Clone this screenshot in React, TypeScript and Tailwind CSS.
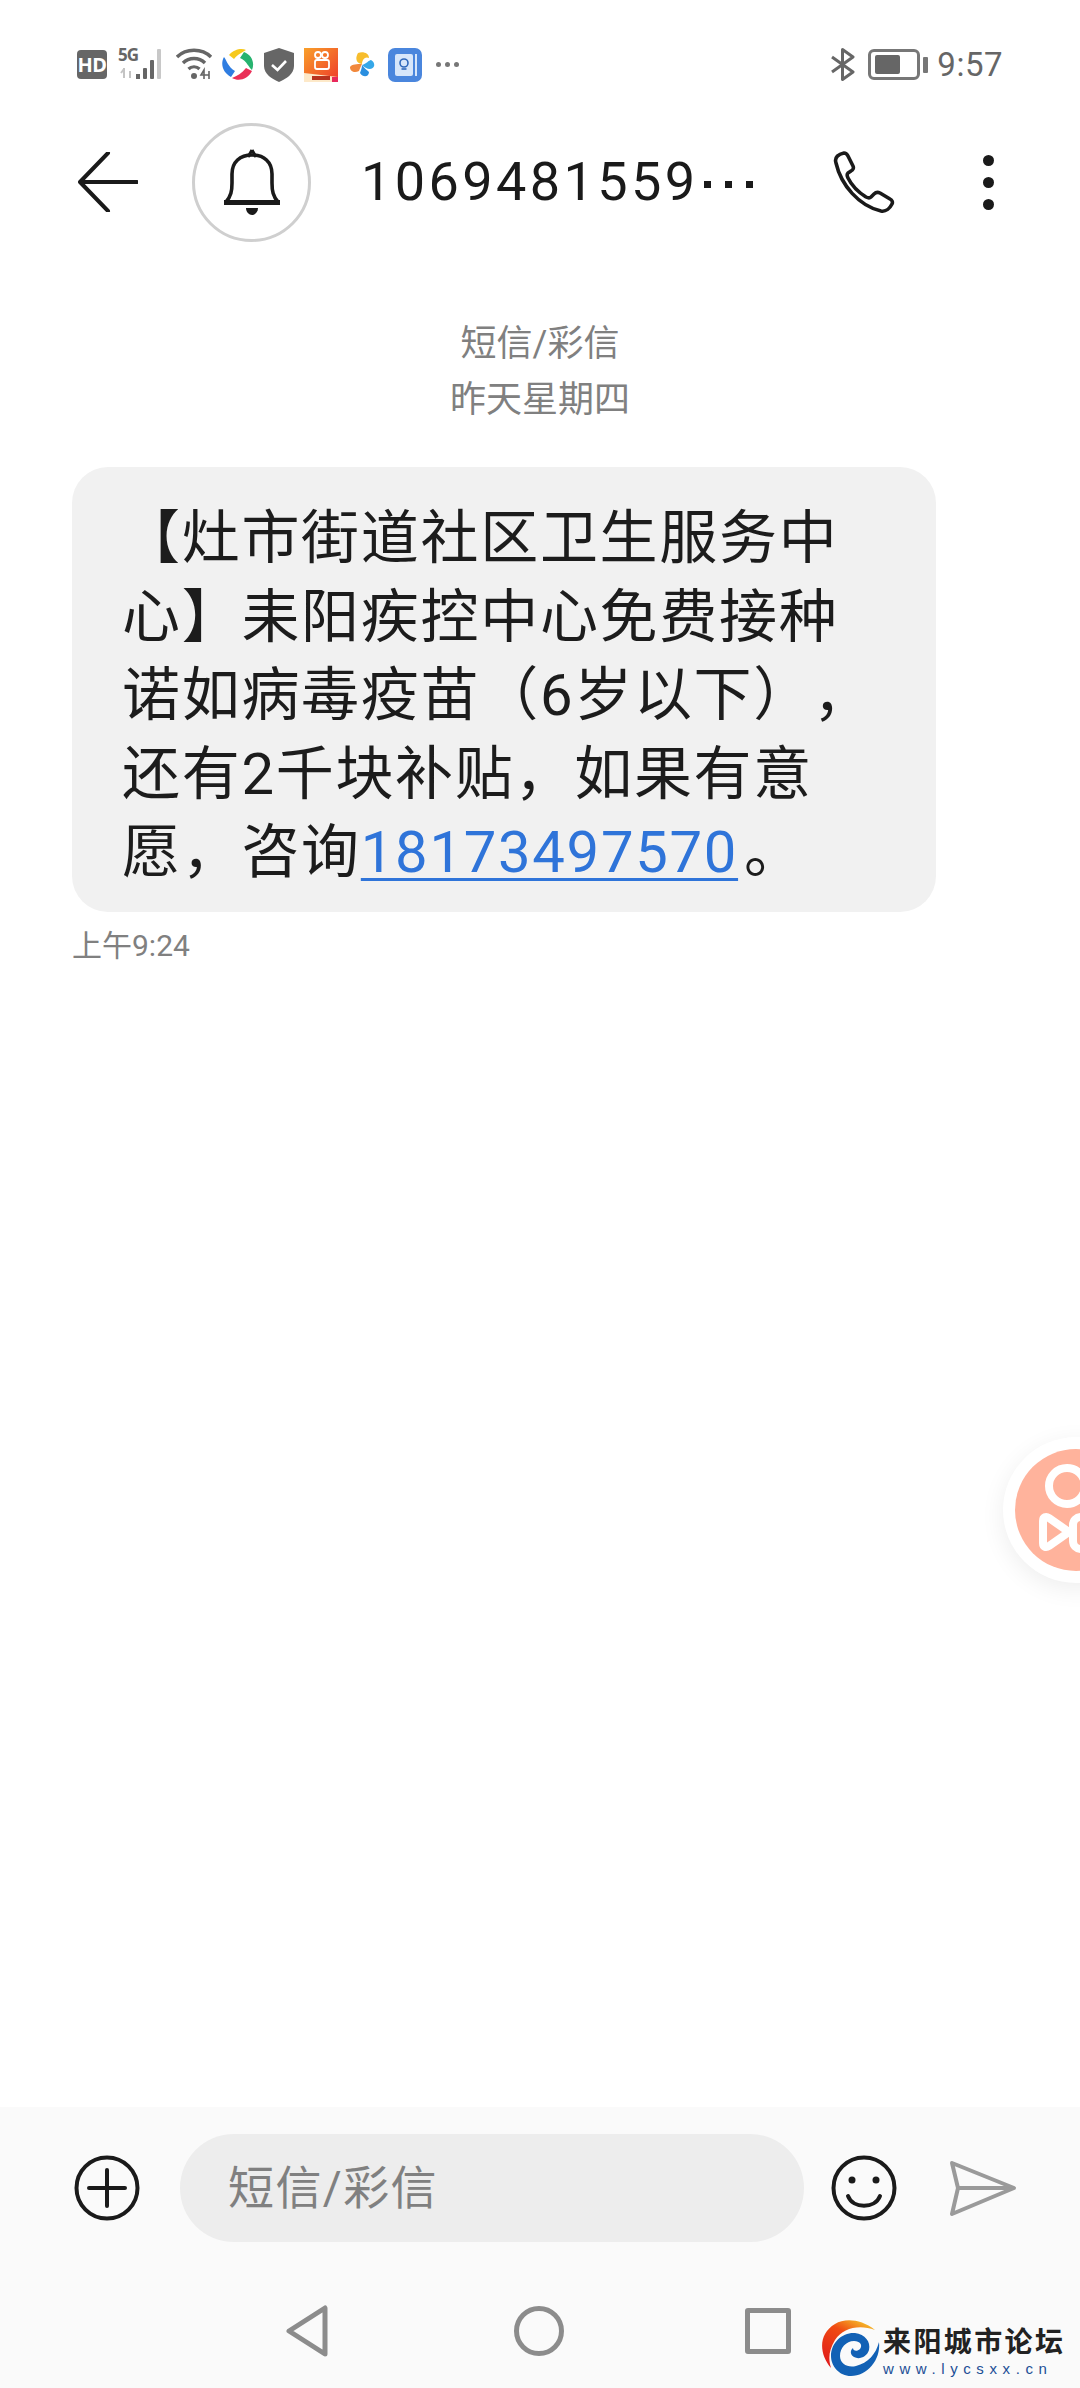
import React from 'react';

const cjk = "font-['Roboto','Noto_Sans_CJK_SC',sans-serif]";

function StatusBar() {
  return (
    <div className="flex h-[122px] items-start pl-[77px] pr-[77px] pt-[48px]">
      <div className="mt-[2px] flex h-[29px] w-[30px] items-center justify-center rounded-[4px] bg-[#666666] text-[20px] font-bold leading-none tracking-[-0.5px] text-white">
        HD
      </div>
      {/* 5G + signal */}
      <div className="relative ml-[11px] h-[32px] w-[49px]">
        <span className="absolute left-0 top-[-2px] text-[17px] font-bold leading-[18px] tracking-[-1px] text-[#666666]">5G</span>
        <svg className="absolute inset-0" width="49" height="32" viewBox="0 0 49 32">
          <path d="M6 20v10M3 25l3-4M12 23v7" stroke="#c4c4c4" strokeWidth="2" fill="none" />
          <rect x="18" y="26" width="4" height="5" fill="#666" />
          <rect x="25" y="20" width="4" height="11" rx="1" fill="#666" />
          <rect x="32" y="12" width="4" height="19" rx="1" fill="#666" />
          <rect x="39" y="1" width="4" height="30" rx="1" fill="#c8c8c8" />
        </svg>
      </div>
      {/* wifi */}
      <svg className="ml-[9px]" width="38" height="32" viewBox="0 0 38 32" fill="none">
        <path d="M1 9C10 0 26 0 35 9" stroke="#666" strokeWidth="3.4" />
        <path d="M7 15C13 9 23 9 29 15" stroke="#666" strokeWidth="3.4" />
        <path d="M12.5 21C15.5 18 20.5 18 23.5 21" stroke="#666" strokeWidth="3.2" />
        <circle cx="18" cy="28" r="3" fill="#666" />
        <path d="M28 31v-9l-3 5h8M33 23v8" stroke="#666" strokeWidth="1.6" />
      </svg>
      {/* ring logo */}
      <svg className="ml-[7px]" width="33" height="33" viewBox="0 0 33 33" fill="none">
        <path d="M8 7C13 1 21 0 25 2C22 4 17 6 13 11Z" fill="#f6c91d" />
        <path d="M23 4C31 7 34 15 31 22C28 20 26 13 19 10Z" fill="#27b36f" />
        <path d="M31 23C27 31 18 34 11 30C16 28 21 25 25 20Z" fill="#ea2f57" />
        <path d="M10 29C2 25 -1 16 3 9C6 13 7 19 14 23Z" fill="#2f7de1" />
      </svg>
      {/* shield */}
      <svg className="ml-[10px]" width="30" height="34" viewBox="0 0 30 34">
        <path d="M15 0L30 5V18C30 26 22 31 15 34C8 31 0 26 0 18V5Z" fill="#666" />
        <path d="M8 17L13.5 22L22 13" stroke="#fff" strokeWidth="2.6" fill="none" />
      </svg>
      {/* kuaishou */}
      <svg className="ml-[10px]" width="34" height="34" viewBox="0 0 34 34">
        <defs>
          <linearGradient id="ks" x1="0" y1="0" x2="1" y2="1">
            <stop offset="0" stopColor="#f9a02a" />
            <stop offset="1" stopColor="#ee3a2a" />
          </linearGradient>
        </defs>
        <rect width="34" height="34" fill="url(#ks)" />
        <circle cx="14" cy="7" r="3" fill="none" stroke="#fff" strokeWidth="1.8" />
        <circle cx="21" cy="7" r="3" fill="none" stroke="#fff" strokeWidth="1.8" />
        <rect x="11" y="12" width="14" height="9" rx="2" fill="none" stroke="#fff" strokeWidth="1.8" />
        <path d="M0 25L34 29V34H0Z" fill="#fde9c9" />
        <rect x="8" y="28" width="18" height="4" fill="#b8341f" />
        <rect x="28" y="29" width="6" height="5" fill="#e8285c" />
      </svg>
      {/* pinwheel */}
      <svg className="ml-[12px] mt-[4px]" width="25" height="26" viewBox="0 0 25 26">
        <path d="M8 1C13 -1 19 1 19 6C15 4 12 8 12 12C8 12 4 8 8 1Z" fill="#f7bd2d" />
        <path d="M12 12C7 12 2 12 0 15C0 20 5 21 9 19C10 16 11 14 12 12Z" fill="#f1883c" />
        <path d="M12 13C16 12 19 8 21 8C25 10 26 16 20 17C17 17 14 15 12 13Z" fill="#35a7e8" />
        <path d="M12 13C12 17 10 20 10 21C13 26 19 25 19 20C17 18 14 16 12 13Z" fill="#2a8fe0" />
      </svg>
      {/* note book */}
      <svg className="ml-[13px]" width="34" height="34" viewBox="0 0 34 34">
        <rect width="34" height="34" rx="7" fill="#4a86dd" />
        <rect x="7" y="6" width="18" height="22" rx="2" fill="#d7e6fa" />
        <rect x="27" y="6" width="2" height="22" fill="#d7e6fa" />
        <circle cx="16" cy="15" r="4" fill="none" stroke="#2f68bb" strokeWidth="1.6" />
        <path d="M13.5 21h5" stroke="#2f68bb" strokeWidth="1.6" />
      </svg>
      <div className="ml-[14px] mt-[14px] flex gap-[4px]">
        <span className="h-[5px] w-[5px] rounded-full bg-[#777777]" />
        <span className="h-[5px] w-[5px] rounded-full bg-[#777777]" />
        <span className="h-[5px] w-[5px] rounded-full bg-[#777777]" />
      </div>

      <div className="ml-auto flex items-start">
        <svg width="26" height="33" viewBox="0 0 26 33" fill="none">
          <path d="M2 9L23 24L12.5 31.5V1.5L23 9L2 24" stroke="#666" strokeWidth="3" strokeLinejoin="round" />
        </svg>
        <div className="ml-[12px] mt-[1px] flex h-[31px] w-[52px] items-center rounded-[6px] border-[3px] border-[#777777] pl-[4px]">
          <div className="h-[19px] w-[25px] rounded-[2px] bg-[#666666]" />
        </div>
        <div className="ml-[3px] mt-[9px] h-[16px] w-[5px] rounded-[1px] bg-[#777777]" />
        <span className={`ml-[9px] mt-[-1px] text-[33px] leading-[36px] tracking-[0.5px] text-[#666666] ${cjk}`}>9:57</span>
      </div>
    </div>
  );
}

function Header() {
  return (
    <div className="flex h-[120px] items-center pl-[78px]">
      <svg width="60" height="60" viewBox="0 0 60 60" fill="none">
        <path d="M59 30H3M30 1L2 30L30 59" stroke="#1a1a1a" strokeWidth="4" strokeLinecap="round" strokeLinejoin="round" />
      </svg>
      <div className="ml-[54px] flex h-[119px] w-[119px] items-center justify-center rounded-full border-[3px] border-[#cfcfcf]">
        <svg width="58" height="66" viewBox="0 0 58 66" fill="none">
          <path d="M29 1L33 8" stroke="#1a1a1a" strokeWidth="3" />
          <path d="M29 1L25 8" stroke="#1a1a1a" strokeWidth="3" />
          <path d="M3 53C8 47 9 42 9 34V25C9 13 17 6 29 6C41 6 49 13 49 25V34C49 42 50 47 55 53Z" stroke="#1a1a1a" strokeWidth="3.6" strokeLinejoin="round" />
          <rect x="1" y="51" width="56" height="5" fill="#1a1a1a" />
          <path d="M23 59H35C35 63 32 66 29 66C26 66 23 63 23 59Z" fill="#1a1a1a" />
        </svg>
      </div>
      <div className={`ml-[50px] flex w-[400px] items-center text-[54px] leading-[60px] tracking-[3.4px] text-[#1a1a1a] ${cjk}`}>
        1069481559
        <div className="ml-[5px] mt-[4px] flex gap-[14px]">
          <span className="h-[7px] w-[7px] bg-[#1a1a1a]" />
          <span className="h-[7px] w-[7px] bg-[#1a1a1a]" />
          <span className="h-[7px] w-[7px] bg-[#1a1a1a]" />
        </div>
      </div>
      <svg className="ml-[72px]" width="62" height="62" viewBox="0 0 62 62" fill="none">
        <path d="M3 12C1 6 6 3 11 2C13 2 14 3 15 5L20 15C21 17 20 19 18 20L15 22C14 23 14 25 15 27C19 35 25 41 33 46C35 47 37 47 38 46L41 43C43 41 45 41 47 42L57 48C59 49 60 51 59 53C57 57 53 61 48 60C26 55 8 34 3 12Z" stroke="#1a1a1a" strokeWidth="3.6" strokeLinejoin="round" />
      </svg>
      <div className="ml-[88px] flex flex-col gap-[11px]">
        <span className="h-[11px] w-[11px] rounded-full bg-[#1a1a1a]" />
        <span className="h-[11px] w-[11px] rounded-full bg-[#1a1a1a]" />
        <span className="h-[11px] w-[11px] rounded-full bg-[#1a1a1a]" />
      </div>
    </div>
  );
}

function Message() {
  return (
    <div className="flex-1 px-[72px] pt-[74px]">
      <div className={`text-center text-[36px] leading-[56px] text-[#808080] ${cjk}`}>
        <div>短信/彩信</div>
        <div>昨天星期四</div>
      </div>
      <div className={`mt-[39px] h-[445px] w-[864px] rounded-[36px] bg-[#f1f1f1] pl-[50px] pt-[32px] text-[58px] leading-[78.5px] tracking-[1.7px] text-[#1c1c1c] [text-spacing-trim:space-all] ${cjk}`}>
        <div className="whitespace-nowrap">【灶市街道社区卫生服务中</div>
        <div className="whitespace-nowrap">心】耒阳疾控中心免费接种</div>
        <div className="whitespace-nowrap">诺如病毒疫苗（6岁以下），</div>
        <div className="whitespace-nowrap">还有2千块补贴，如果有意</div>
        <div className="whitespace-nowrap">
          愿，咨询<span className="text-[#2f74d9] underline decoration-[3px] underline-offset-[6px]">18173497570</span><span className="ml-[6px]">。</span>
        </div>
      </div>
      <div className={`mt-[14px] text-[30px] leading-[40px] text-[#808080] ${cjk}`}>上午9:24</div>
    </div>
  );
}

function Composer() {
  return (
    <div className="h-[281px] bg-[#fafafa]">
      <div className="flex items-center pl-[74px] pt-[27px]">
        <svg width="66" height="66" viewBox="0 0 66 66" fill="none">
          <circle cx="33" cy="33" r="30.5" stroke="#1a1a1a" strokeWidth="4" />
          <path d="M33 15V51M15 33H51" stroke="#1a1a1a" strokeWidth="4" strokeLinecap="round" />
        </svg>
        <div className={`ml-[40px] flex h-[108px] w-[624px] items-center rounded-full bg-[#ededed] pl-[48px] text-[46px] tracking-[1.4px] text-[#808080] ${cjk}`}>
          短信/彩信
        </div>
        <svg className="ml-[27px]" width="66" height="66" viewBox="0 0 66 66" fill="none">
          <circle cx="33" cy="33" r="30.5" stroke="#1a1a1a" strokeWidth="4" />
          <circle cx="21" cy="25" r="3.5" fill="#1a1a1a" />
          <circle cx="45" cy="25" r="3.5" fill="#1a1a1a" />
          <path d="M17 41C22 54 44 54 49 41" stroke="#1a1a1a" strokeWidth="4" strokeLinecap="round" />
        </svg>
        <svg className="ml-[52px]" width="68" height="57" viewBox="0 0 68 57" fill="none">
          <path d="M3 3L65 28L3 54L9 28ZM9 28H65" stroke="#9a9a9a" strokeWidth="4" strokeLinejoin="round" />
        </svg>
      </div>
      {/* nav bar */}
      <div className="mt-[63px] flex items-center justify-center pr-[3px]">
        <svg width="42" height="52" viewBox="0 0 42 52" fill="none">
          <path d="M39 3V49L3 26Z" stroke="#8c8c8c" strokeWidth="5" strokeLinejoin="round" />
        </svg>
        <div className="ml-[186px] h-[50px] w-[50px] rounded-full border-[5px] border-[#8c8c8c]" />
        <div className="ml-[181px] h-[46px] w-[46px] rounded-[3px] border-[5px] border-[#8c8c8c]" />
      </div>
    </div>
  );
}

function FloatingBall() {
  return (
    <div className="absolute left-[1003px] top-[1437px] flex h-[146px] w-[146px] items-center justify-center rounded-full bg-white shadow-[0_6px_24px_rgba(0,0,0,0.07)]">
      <svg width="122" height="122" viewBox="0 0 122 122">
        <circle cx="61" cy="61" r="61" fill="#ffb39c" />
        <circle cx="52" cy="37" r="18" fill="none" stroke="#fff" strokeWidth="8" />
        <path d="M28 72C28 68 31 67 34 69L54 83L34 97C31 99 28 98 28 94Z" fill="none" stroke="#fff" strokeWidth="8" strokeLinejoin="round" />
        <rect x="58" y="68" width="40" height="32" rx="8" fill="none" stroke="#fff" strokeWidth="8" />
      </svg>
    </div>
  );
}

function Watermark() {
  return (
    <div className="absolute left-[821px] top-[2320px] flex">
      <svg width="60" height="56" viewBox="0 0 60 56">
        <defs>
          <linearGradient id="wm" x1="0.2" y1="1" x2="0.8" y2="0">
            <stop offset="0" stopColor="#e01b1b" />
            <stop offset="0.65" stopColor="#f04a12" />
            <stop offset="1" stopColor="#f5c02a" />
          </linearGradient>
        </defs>
        <path d="M10 48C-2 34 -3 14 14 4C24 -2 40 -1 54 10C38 4 22 8 14 20C8 30 7 38 10 48Z" fill="url(#wm)" />
        <path d="M58 22C60 40 46 56 30 56C18 56 10 46 10 36C10 22 22 12 34 13C44 14 50 22 48 30C46 37 38 40 33 37C29 35 29 30 32 28C32 31 36 32 39 29C42 25 39 21 33 21C25 21 19 28 19 36C19 44 27 48 35 46C47 43 55 34 58 22Z" fill="#1261b5" />
      </svg>
      <div className="ml-[2px] pt-[6px]">
        <div className={`text-[28px] font-bold leading-[34px] tracking-[2.4px] text-[#222222] ${cjk}`}>来阳城市论坛</div>
        <div className="mt-[1px] text-[15px] leading-[16px] tracking-[5.6px] text-[#1d4f96] font-['Liberation_Sans',sans-serif]">www.lycsxx.cn</div>
      </div>
    </div>
  );
}

export default function App() {
  return (
    <div className="relative flex h-[2388px] w-[1080px] flex-col overflow-hidden bg-white">
      <StatusBar />
      <Header />
      <Message />
      <Composer />
      <FloatingBall />
      <Watermark />
    </div>
  );
}
